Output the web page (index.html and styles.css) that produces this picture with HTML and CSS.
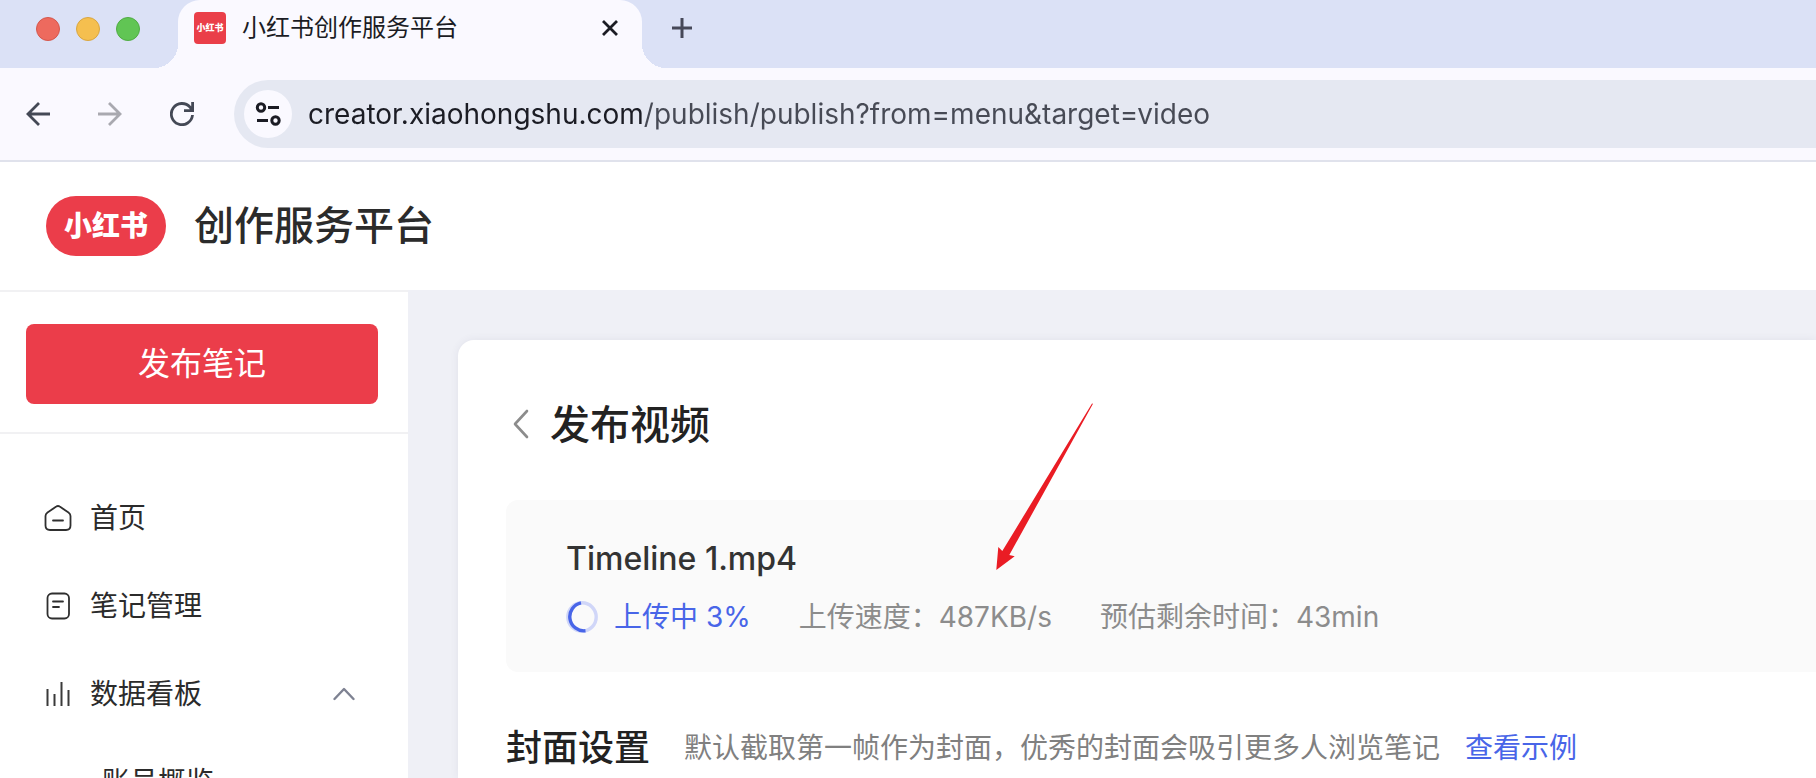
FILE: index.html
```html
<!DOCTYPE html>
<html lang="zh-CN">

<head>
    <meta charset="UTF-8">
    <title>小红书创作服务平台</title>
    <link rel="stylesheet" href="styles.css">
</head>

<body>
    <div class="tab-strip">
        <div class="lights">
            <span class="light red"></span>
            <span class="light yellow"></span>
            <span class="light green"></span>
        </div>
        <div class="tab">
            <span class="favicon">小红书</span>
            <span class="tab-title">小红书创作服务平台</span>
            <button class="icon-btn" type="button" aria-label="关闭标签页">
                <svg width="20" height="20" viewBox="0 0 20 20" fill="none" stroke="#1b1c24" stroke-width="2.800">
                    <path d="M3 3L17 17M17 3L3 17" />
                </svg>
            </button>
        </div>
        <button class="icon-btn new-tab" type="button" aria-label="新标签页">
            <svg width="20" height="20" viewBox="0 0 20 20" fill="none" stroke="#464858" stroke-width="3">
                <path d="M10 0V20M0 10H20" />
            </svg>
        </button>
    </div>

    <div class="toolbar">
        <button class="icon-btn" type="button" aria-label="后退">
            <svg width="24" height="24" viewBox="0 0 24 24" fill="none" stroke="#444956" stroke-width="2.800">
                <path d="M24 12H2M13 1L2 12L13 23" />
            </svg>
        </button>
        <button class="icon-btn" type="button" aria-label="前进" disabled>
            <svg width="24" height="24" viewBox="0 0 24 24" fill="none" stroke="#a9a9b0" stroke-width="2.800">
                <path d="M0 12H22M11 1L22 12L11 23" />
            </svg>
        </button>
        <button class="icon-btn" type="button" aria-label="重新加载">
            <svg width="24" height="24" viewBox="0 0 24 24" fill="none" stroke="#444956" stroke-width="2.800">
                <path d="M22.500 13A10.600 10.600 0 1 1 20 5.200L22.500 8.500M22.600 0V8.600H14" />
            </svg>
        </button>
        <div class="address">
            <button class="site-info" type="button" aria-label="网站信息">
                <svg width="26" height="24" viewBox="0 0 26 24" fill="none" stroke="#1b1c24" stroke-width="3">
                    <circle cx="6" cy="5.500" r="3.700" />
                    <path d="M13 5.500H24M2 18.500H13" />
                    <circle cx="20.500" cy="18.500" r="3.700" />
                </svg>
            </button>
            <input class="url" type="text" aria-label="地址" value="creator.xiaohongshu.com/publish/publish?from=menu&amp;target=video">
        </div>
    </div>

    <header class="header">
        <span class="logo">小红书</span>
        <span class="header-title">创作服务平台</span>
    </header>

    <div class="layout">
        <aside class="sidebar">
            <div class="publish">
                <button class="publish-btn" type="button">发布笔记</button>
            </div>
            <nav class="nav">
                <a class="nav-item" href="#">
                    <svg width="28" height="28" viewBox="0 0 28 28" fill="none" stroke="#2f2f2f" stroke-width="1.800" stroke-linejoin="round" stroke-linecap="round">
                        <path d="M12.300 2.600Q14 1.400 15.700 2.600L24.500 8.400Q26.500 9.800 26.500 12V21.500Q26.500 26 22 26H6Q1.500 26 1.500 21.500V12Q1.500 9.800 3.500 8.400Z" />
                        <path d="M9 16.500H19" />
                    </svg>
                    <span>首页</span>
                </a>
                <a class="nav-item" href="#">
                    <svg width="28" height="28" viewBox="0 0 28 28" fill="none" stroke="#2f2f2f" stroke-width="1.800" stroke-linecap="round">
                        <rect x="3.500" y="1.500" width="21.500" height="25" rx="4.500" />
                        <path d="M9 9.500H19M9 15H15" />
                    </svg>
                    <span>笔记管理</span>
                </a>
                <a class="nav-item" href="#">
                    <svg width="28" height="28" viewBox="0 0 28 28" fill="none" stroke="#3a3a3a" stroke-width="2">
                        <path d="M3.500 9V26M10.500 14V26M17.500 2V26M24.500 10V26" />
                    </svg>
                    <span>数据看板</span>
                    <svg class="fold" width="22" height="14" viewBox="0 0 22 14" fill="none" stroke="#7e8292" stroke-width="2.400" stroke-linecap="round" stroke-linejoin="round">
                        <path d="M1.500 12L11 2L20.500 12" />
                    </svg>
                </a>
                <a class="nav-item sub" href="#">账号概览</a>
            </nav>
        </aside>

        <main class="main">
            <div class="card">
                <div class="card-head">
                    <button class="icon-btn" type="button" aria-label="返回">
                        <svg width="16" height="32" viewBox="0 0 16 32" fill="none" stroke="#8c8c8c" stroke-width="2.600" stroke-linecap="round" stroke-linejoin="round">
                            <path d="M14 2L2 15L14 28" />
                        </svg>
                    </button>
                    <h1 class="title">发布视频</h1>
                </div>

                <section class="upload">
                    <div class="file-name">Timeline 1.mp4</div>
                    <div class="status">
                        <svg width="32" height="32" viewBox="0 0 32 32" fill="none" stroke-width="3.400">
                            <circle cx="16" cy="16" r="14.200" stroke="#d0d6f8" />
                            <path d="M15 1.800A14.200 14.200 0 0 0 19.500 29.800" stroke="#4865e8" />
                        </svg>
                        <span class="progress">上传中 3%</span>
                        <span class="stat">上传速度：487KB/s</span>
                        <span class="stat">预估剩余时间：43min</span>
                    </div>
                </section>

                <section class="cover">
                    <h2 class="cover-title">封面设置</h2>
                    <span class="cover-tip">默认截取第一帧作为封面，优秀的封面会吸引更多人浏览笔记</span>
                    <a class="link" href="#">查看示例</a>
                </section>

                <svg class="pointer" width="98" height="168" viewBox="0 0 98 168" fill="#ea1c24">
                    <path d="M0.300 167L2.300 144L6.300 148L96 0.500L97 0.800L13.300 152L18.700 153.300Z" />
                </svg>
            </div>
        </main>
    </div>
</body>

</html>
```

FILE: styles.css
```css
* {
    box-sizing: border-box;
}

body {
    margin: 0;
    height: 100vh;
    overflow: hidden;
    display: flex;
    flex-direction: column;
    background-color: #fff;
    color: #2b2b2b;
    font-family: Inter, "Noto Sans CJK SC", sans-serif;
    font-size: 28px;
    line-height: 40px;
    white-space: nowrap;
}

button {
    padding: 0;
    border: 0;
    background: none;
    font-family: inherit;
}

a {
    text-decoration: none;
}

svg {
    display: block;
    flex: none;
}

.icon-btn {
    display: flex;
}

/* browser tabs */
.tab-strip {
    flex: none;
    display: flex;
    height: 68px;
    background-color: #dbe1f6;
}

.lights {
    display: flex;
    gap: 16px;
    width: 178px;
    padding: 17px 0 0 36px;
}

.light {
    width: 24px;
    height: 24px;
    border-radius: 50%;
    border: 1px solid;
}

.red {
    background-color: #ed6a5e;
    border-color: #d5574c;
}

.yellow {
    background-color: #f5bf4f;
    border-color: #d9a640;
}

.green {
    background-color: #61c554;
    border-color: #50ac43;
}

.tab {
    position: relative;
    display: flex;
    align-items: center;
    width: 464px;
    padding: 0 22px 12px 16px;
    border-radius: 22px 22px 0 0;
    background-color: #faf9ff;
}

.tab::before,
.tab::after {
    content: "";
    position: absolute;
    bottom: 0;
    width: 24px;
    height: 24px;
}

.tab::before {
    right: 100%;
    background: radial-gradient(circle at 0 0, transparent 24px, #faf9ff 24px);
}

.tab::after {
    left: 100%;
    background: radial-gradient(circle at 100% 0, transparent 24px, #faf9ff 24px);
}

.favicon {
    width: 32px;
    border-radius: 4px;
    background-color: #ea3f49;
    color: #fff;
    font-size: 9px;
    font-weight: 900;
    line-height: 32px;
    text-align: center;
}

.tab-title {
    flex: 1;
    padding-left: 16px;
    color: #1b1c24;
    font-size: 24px;
}

.new-tab {
    padding: 18px 30px;
}

/* address row */
.toolbar {
    flex: none;
    display: flex;
    align-items: center;
    gap: 48px;
    padding: 12px 0 12px 26px;
    border-bottom: 2px solid #e0e2ec;
    background-color: #faf9ff;
}

.address {
    flex: 1;
    display: flex;
    align-items: center;
    gap: 16px;
    height: 68px;
    margin-left: -8px;
    padding-left: 10px;
    border-radius: 34px 0 0 34px;
    background-color: #e5e8f2;
}

.site-info {
    display: flex;
    align-items: center;
    justify-content: center;
    width: 48px;
    height: 48px;
    border-radius: 50%;
    background-color: #faf9ff;
}

/* the host part is darker than the path */
.url {
    flex: 1;
    padding: 0;
    border: 0;
    background: linear-gradient(90deg, #1b1c24 335px, #474a55 335px);
    background-clip: text;
    color: transparent;
    font-family: Inter, sans-serif;
    font-size: 28px;
    line-height: 40px;
}

/* site header */
.header {
    flex: none;
    display: flex;
    align-items: center;
    gap: 28px;
    height: 130px;
    padding: 0 46px;
    border-bottom: 2px solid #f1f1f3;
}

.logo {
    width: 120px;
    border-radius: 30px;
    background-color: #eb3d4a;
    color: #fff;
    font-weight: 900;
    line-height: 60px;
    text-align: center;
}

.header-title {
    font-size: 40px;
    font-weight: 500;
}

/* sidebar */
.layout {
    flex: 1;
    display: flex;
    min-height: 0;
}

.sidebar {
    flex: none;
    width: 408px;
}

.publish {
    padding: 32px 30px 28px 26px;
    border-bottom: 2px solid #f1f1f3;
}

.publish-btn {
    display: block;
    width: 100%;
    border-radius: 8px;
    background-color: #eb3d4a;
    color: #fff;
    font-size: 32px;
    line-height: 80px;
}

.nav {
    padding: 40px 53px 0 44px;
}

.nav-item {
    display: flex;
    align-items: center;
    gap: 18px;
    height: 88px;
    color: #2b2b2b;
}

.fold {
    margin-left: auto;
}

.sub {
    padding-left: 58px;
}

/* content, covers the header line on this side */
.main {
    flex: 1;
    display: flex;
    margin-top: -2px;
    padding: 50px 0 0 50px;
    background-color: #eff0f6;
}

.card {
    position: relative;
    flex: 1;
    padding: 60px 0 0 48px;
    border-radius: 16px 0 0 0;
    background-color: #fff;
    box-shadow: 0 0 8px rgba(60, 64, 100, 0.08);
}

.card-head {
    display: flex;
    align-items: center;
    gap: 21px;
    padding-left: 7px;
}

.title,
.cover-title {
    margin: 0;
    font-weight: 500;
    color: #222;
}

.title {
    font-size: 40px;
    line-height: 50px;
}

.upload {
    margin-top: 50px;
    padding: 39px 60px 35px;
    border-radius: 12px 0 0 12px;
    background-color: #fafafa;
}

.file-name {
    color: #333;
    font-size: 32px;
    font-weight: 500;
}

.status {
    display: flex;
    align-items: center;
    margin-top: 18px;
    color: #8c8c8c;
}

.progress {
    padding-left: 16px;
    color: #4865e8;
}

.stat {
    padding-left: 48px;
}

.cover {
    display: flex;
    align-items: center;
    padding-top: 52px;
}

.cover-title {
    font-size: 36px;
    line-height: 48px;
}

.cover-tip {
    padding: 0 25px 0 34px;
    color: #808080;
}

.link {
    color: #4865e8;
}

/* arrow drawn over the upload box */
.pointer {
    position: absolute;
    left: 538px;
    top: 63px;
}
```
